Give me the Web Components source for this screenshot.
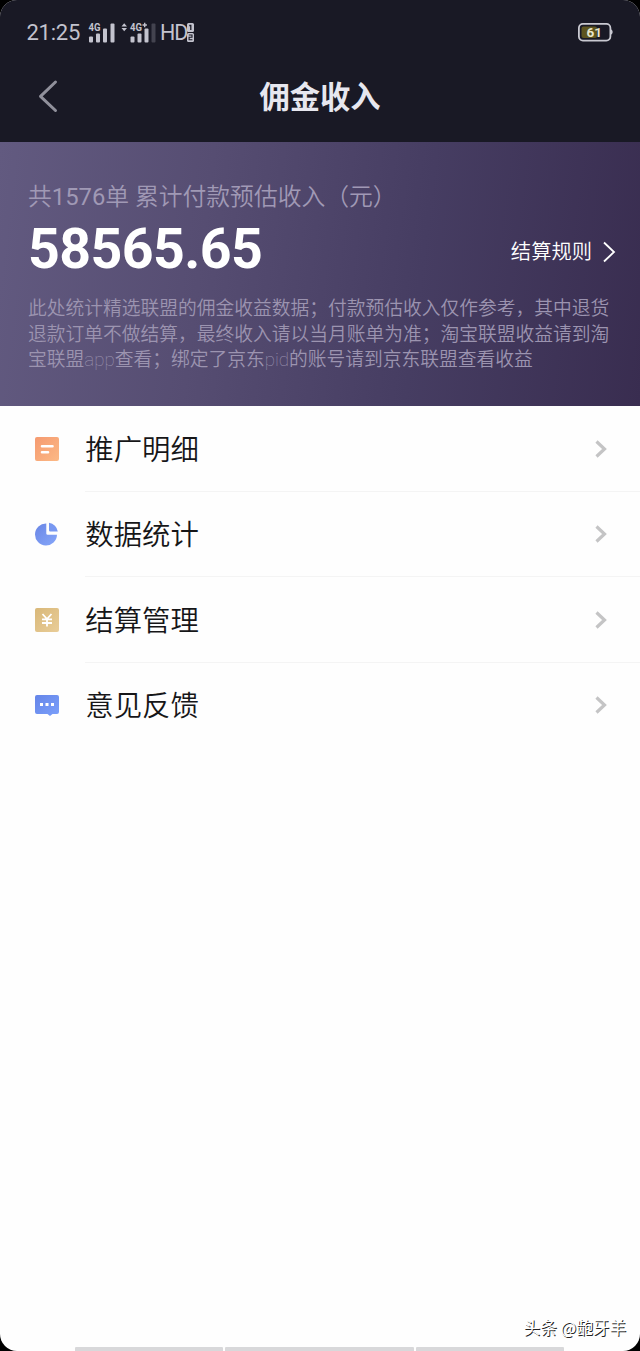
<!DOCTYPE html>
<html lang="zh-CN">
<head>
<meta charset="utf-8">
<title>佣金收入</title>
<style>
html{background:#000}
body{margin:0;font-family:Roboto,"Noto Sans CJK SC",sans-serif}
</style>
</head>
<body>
<income-app></income-app>
<script>
const define = (name, html) => {
  const t = document.createElement('template');
  t.innerHTML = html;
  customElements.define(name, class extends HTMLElement {
    constructor() {
      super();
      this.attachShadow({mode: 'open'}).append(t.content.cloneNode(true));
    }
  });
};

define('status-bar', `
<style>
:host{display:flex;height:60px;box-sizing:border-box;padding:5px 27px 0 26.5px;align-items:center;color:#c3c3ce;font-size:22px;line-height:26px}
.time{width:60px;letter-spacing:-.25px}
.sig{width:73px;height:26px;flex:none}
.hd{font-size:21.5px;letter-spacing:-1px;margin-left:.5px}
.sim{width:9px;height:22px;margin-left:-1px}
.bat{margin-left:auto;width:36px;height:20px;margin-top:-2px}
svg text{font-family:Roboto,sans-serif;font-weight:700}
</style>
<span class="time">21:25</span>
<svg class="sig" viewBox="0 0 73 26" fill="#c3c3ce">
<text x="1.5" y="11" font-size="10.5" textLength="12" lengthAdjust="spacingAndGlyphs">4G</text>
<rect x="2" y="16.500" width="4" height="6" rx="1"/><rect x="9" y="13.500" width="4" height="9" rx="1"/><rect x="16" y="8.500" width="4" height="14" rx="1"/><rect x="23.500" y="3.500" width="4" height="19" rx="1"/>
<path d="M34.5 6.5 37.2 3.2 40 6.5ZM34.5 8 37.2 11.300 40 8Z"/>
<text x="43" y="11" font-size="10.5" textLength="12" lengthAdjust="spacingAndGlyphs">4G</text>
<path d="M55.500 4.300h1.500V2.800h1.400v1.500h1.500v1.400h-1.500v1.500h-1.400V5.700h-1.500z"/>
<rect x="43.500" y="16.500" width="4" height="6" rx="1"/><rect x="50.500" y="13.500" width="4" height="9" rx="1"/><rect x="57.500" y="8.500" width="4" height="14" rx="1"/><rect x="64.500" y="3.500" width="4" height="19" rx="1" opacity=".25"/>
</svg>
<span class="hd">HD</span>
<svg class="sim" viewBox="0 0 9 22"><rect x="1" y="1" width="7" height="9" rx="1.500" fill="#c3c3ce"/><rect x="1" y="11" width="7" height="9" rx="1.500" fill="#c3c3ce"/>
<path d="M3.300 3.500h1.500v4.500" fill="none" stroke="#191925" stroke-width="1.300"/><path d="M2.800 13h3.200v2.300H3.100v2.500h3.300" fill="none" stroke="#191925" stroke-width="1.100"/></svg>
<svg class="bat" viewBox="0 0 36 20"><rect x="1.900" y="1.900" width="31.500" height="16.700" rx="4" fill="none" stroke="#c9c9d1" stroke-width="1.800"/><path d="M34 7.500c2.200.4 2.200 4.600 0 5z" fill="#c9c9d1"/><rect x="4.500" y="4.500" width="15.500" height="11.500" rx="2" fill="#5d541e"/><text x="17.300" y="15" text-anchor="middle" font-size="13.500" fill="#e8e6cc">61</text></svg>
`);

define('nav-bar', `
<style>
:host{display:grid;grid-template-columns:80px 1fr 80px;height:82px;align-items:start;color:#e7e7ef}
svg{width:22px;height:36px;margin:18px 0 0 37px}
h1{margin:15px 0 0;text-align:center;font-size:30.300px;line-height:46px;font-weight:700}
</style>
<svg viewBox="0 0 22 36" fill="none" stroke="#90909b" stroke-width="3" stroke-linecap="round" stroke-linejoin="round"><path d="M18.500 4 3.500 18.300 18.500 32.500"/></svg>
<h1><slot></slot></h1>
`);

define('income-card', `
<style>
:host{display:block;height:264px;box-sizing:border-box;padding:37px 24px 0 28px;background:linear-gradient(97deg,#625a80 0%,#564d72 32%,#463d62 65%,#392d50 100%)}
.cap{font-size:23.800px;line-height:36px;color:#a099b5;font-weight:350;white-space:pre}
.row{display:flex;align-items:center;justify-content:space-between;height:66px;color:#fff}
.num{font-size:55.500px;font-weight:700;line-height:64px;letter-spacing:-.6px;margin-top:4px}
.rule{display:flex;align-items:center;font-size:20.300px;line-height:30px;margin-top:7px;font-weight:350}
.rule svg{width:14px;height:24px;margin-left:10px}
p{margin:16px 0 0;font-size:18.750px;line-height:25.700px;color:#9c94b0;font-weight:350;white-space:nowrap}
i{font-style:normal;font-weight:100}
</style>
<div class="cap"><slot name="caption"></slot></div>
<div class="row"><span class="num"><slot name="amount"></slot></span>
<span class="rule">结算规则<svg viewBox="0 0 14 24" fill="none" stroke="#fff" stroke-width="1.800"><path d="M2 2.500 12 12 2 21.500"/></svg></span></div>
<p>此处统计精选联盟的佣金收益数据；付款预估收入仅作参考，其中退货<br>退款订单不做结算，最终收入请以当月账单为准；淘宝联盟收益请到淘<br>宝联盟<i>app</i>查看；绑定了京东<i>pid</i>的账号请到京东联盟查看收益</p>
`);

define('menu-item', `
<style>
:host{display:flex;height:85.400px;padding-left:35px;color:#161618}
.ic{display:flex;align-items:center;width:50px}
::slotted(svg){width:24px;height:24px;display:block;margin-top:-1px}
.body{flex:1;display:flex;align-items:center;justify-content:space-between;padding-right:32px;border-bottom:1px solid #f4f4f4;font-size:28.400px;line-height:42px;font-weight:350}
.label{padding:4px 0 0 .3px}
:host([last]) .body{border-color:transparent}
.arr{width:14px;height:20px}
</style>
<div class="ic"><slot name="icon"></slot></div>
<div class="body"><span class="label"><slot></slot></span><svg class="arr" viewBox="0 0 14 20" fill="none" stroke="#c4c4c5" stroke-width="3.200"><path d="M2.500 2.500 10.500 10 2.500 17.500"/></svg></div>
`);

define('gesture-hints', `
<style>
:host{display:flex;gap:2px;padding:0 75px;height:4px}
span{background:#d8d8da;border-radius:1px 1px 0 0;flex:0 0 148px}
span:nth-of-type(2){flex-basis:189px}
</style><span></span><span></span><span></span>
`);

define('water-mark', `
<style>
:host{position:absolute;right:14px;bottom:11px;font:400 16.600px/25px "Noto Sans CJK SC",sans-serif;color:#fff;white-space:pre;text-shadow:1px 1px 0 #222}
</style><slot></slot>
`);

define('income-app', `
<style>
:host{display:flex;flex-direction:column;position:relative;width:640px;height:1351px;background:#fefefe;border-radius:17px;overflow:hidden}
header{background:#191925}
main{flex:1;padding-top:.6px}
.n{font-weight:400}
</style>
<header><status-bar></status-bar><nav-bar>佣金收入</nav-bar></header>
<income-card><span slot="caption">共<span class="n">1576</span>单 累计付款预估收入（元）</span><span slot="amount">58565.65</span></income-card>
<main>
<menu-item><svg slot="icon" viewBox="0 0 24 24"><defs><linearGradient id="a" x2="1" y2="1"><stop stop-color="#f59a70"/><stop offset="1" stop-color="#fcb985"/></linearGradient></defs><rect width="24" height="24" rx="2" fill="url(#a)"/><path d="M7 9.300h10.500M7 15.300h6" stroke="#fff" stroke-width="2.600" stroke-linecap="round"/></svg>推广明细</menu-item>
<menu-item><svg slot="icon" viewBox="0 0 24 24"><defs><linearGradient id="b" x2="1" y2="1"><stop stop-color="#6a86e5"/><stop offset="1" stop-color="#86a7fa"/></linearGradient></defs><path d="M11.300 1.500A11 11 0 1 0 22 12.800H12.700a1.400 1.400 0 0 1-1.400-1.400z" fill="url(#b)"/><path d="M14 .8a10 10 0 0 1 8.800 8.800h-7.500A1.300 1.300 0 0 1 14 8.300z" fill="#7898f1"/></svg>数据统计</menu-item>
<menu-item><svg slot="icon" viewBox="0 0 24 24"><defs><linearGradient id="c" x2="1" y2="1"><stop stop-color="#d9b879"/><stop offset="1" stop-color="#e9cd98"/></linearGradient></defs><rect width="24" height="24" rx="2" fill="url(#c)"/><path d="M7.500 6 12 11 16.500 6M12 11v7.500M7 11.300h10M7 15h10" stroke="#fff" stroke-width="1.800" fill="none"/></svg>结算管理</menu-item>
<menu-item last><svg slot="icon" viewBox="0 0 24 24"><defs><linearGradient id="d" x2="1" y2="1"><stop stop-color="#6585e8"/><stop offset="1" stop-color="#7ba0fb"/></linearGradient></defs><path d="M2 2h20a2 2 0 0 1 2 2v15a2 2 0 0 1-2 2h-4.500L15 23l-2.500-2H2a2 2 0 0 1-2-2V4a2 2 0 0 1 2-2z" fill="url(#d)"/><path d="M5 10h3v3H5zM10.500 10h3v3h-3zM16 10h3v3h-3z" fill="#fff"/></svg>意见反馈</menu-item>
</main>
<gesture-hints></gesture-hints>
<water-mark>头条 @龅牙羊</water-mark>
`);
</script>
</body>
</html>
